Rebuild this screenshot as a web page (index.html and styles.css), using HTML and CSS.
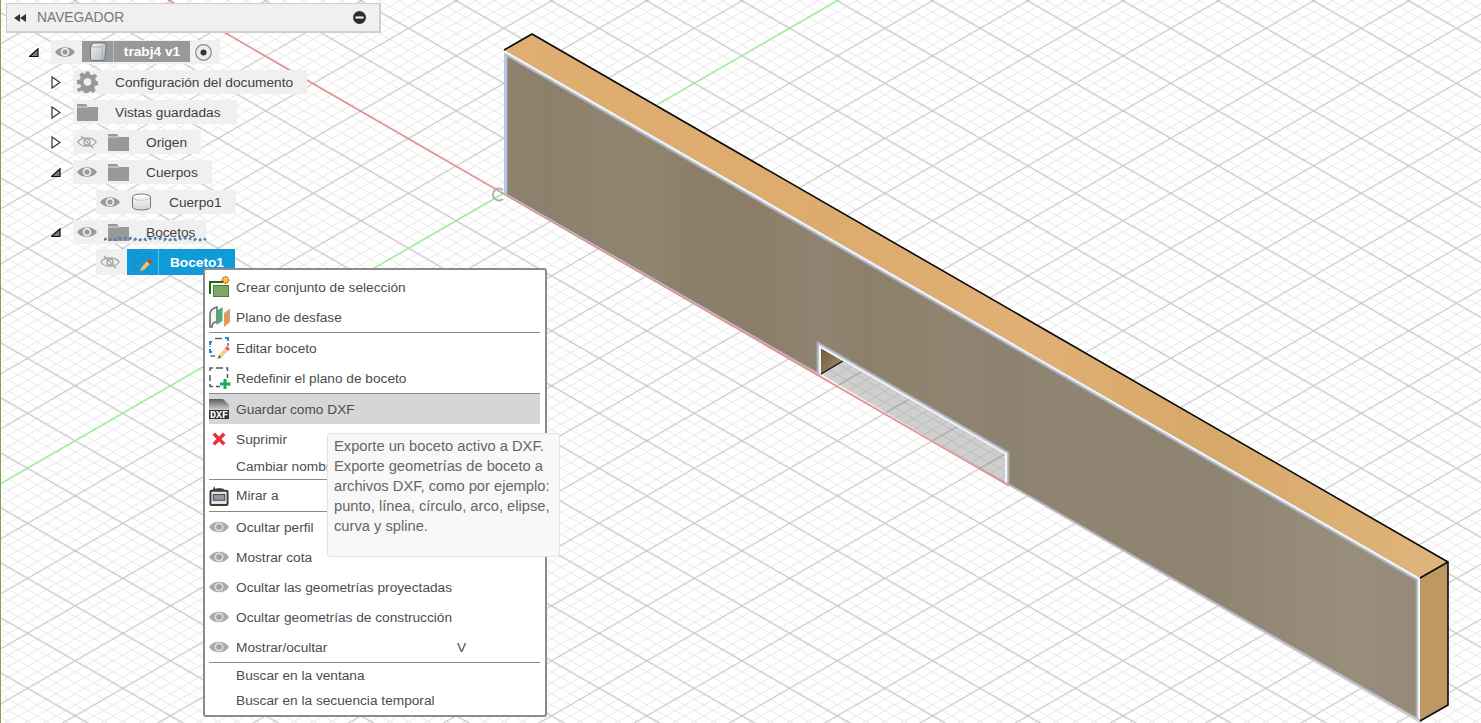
FILE: index.html
```html
<!DOCTYPE html>
<html lang="es">
<head>
<meta charset="utf-8">
<title>Navegador</title>
<link rel="stylesheet" href="styles.css">
</head>
<body>
<div class="viewport">

<svg class="canvas" width="1481" height="723" viewBox="0 0 1481 723">
  <defs>
    <pattern id="grid" width="100" height="100" patternUnits="userSpaceOnUse" patternTransform="matrix(.4763 .275 .4763 -.275 1161.17 28.3)">
      <g class="minor">
        <path d="M30 0V100M50 0V100M70 0V100M90 0V100M0 30H100M0 50H100M0 70H100M0 90H100"/>
      </g>
      <g class="major">
        <path d="M10 0V100M0 10H100"/>
      </g>
    </pattern>
    <linearGradient id="frontFill" gradientUnits="userSpaceOnUse" x1="504" y1="0" x2="1420" y2="0">
      <stop offset="0" stop-color="#8e8270"/>
      <stop offset=".05" stop-color="#8c806c"/>
      <stop offset=".1" stop-color="#8f836f"/>
      <stop offset=".16" stop-color="#91856f"/>
      <stop offset=".2" stop-color="#8c7f6a"/>
      <stop offset=".27" stop-color="#8b7d68"/>
      <stop offset=".34" stop-color="#8f8371"/>
      <stop offset=".4" stop-color="#8c806c"/>
      <stop offset=".47" stop-color="#8f8370"/>
      <stop offset=".55" stop-color="#8d8170"/>
      <stop offset=".62" stop-color="#908472"/>
      <stop offset=".7" stop-color="#8e8270"/>
      <stop offset=".78" stop-color="#8f8472"/>
      <stop offset=".86" stop-color="#958977"/>
      <stop offset=".93" stop-color="#998d7b"/>
      <stop offset="1" stop-color="#948978"/>
    </linearGradient>
    <linearGradient id="topFill" gradientUnits="userSpaceOnUse" x1="504" y1="0" x2="1448" y2="0">
      <stop offset="0" stop-color="#dfae70"/>
      <stop offset=".35" stop-color="#dcab6d"/>
      <stop offset=".55" stop-color="#e0b074"/>
      <stop offset=".75" stop-color="#d7a869"/>
      <stop offset="1" stop-color="#e0b57c"/>
    </linearGradient>
    <linearGradient id="holeFill" x1="0" y1="0" x2="1" y2="1">
      <stop offset="0" stop-color="#6f5a3c"/>
      <stop offset="1" stop-color="#a58f6a"/>
    </linearGradient>
    <clipPath id="frontClip">
      <path d="M504 50L1420 578V721L1005 483V454.500L821 348.300V376L504 194Z"/>
    </clipPath>
  </defs>

  <rect class="grid-fill" width="1481" height="723"/>
  <path class="axis-green" d="M0 484L840 -1"/>
  <path class="axis-red" d="M168 0L1009 486"/>
  <rect class="edge-green" width="1" height="723"/>

  <path class="hole-shade" d="M821 374L843 361L1005 454.500V483Z"/>
  <path fill="url(#holeFill)" d="M821 348.300L843 361L821 374Z"/>
  <path class="hole-line" d="M821 374L843 361"/>

  <path fill="url(#topFill)" d="M504 50L532 34L1448 562L1420 578Z"/>
  <path class="side-face" d="M1420 578L1448 562V705L1420 721Z"/>
  <path fill="url(#frontFill)" d="M504 50L1420 578V721L1005 483V454.500L821 348.300V376L504 194Z"/>

  <g clip-path="url(#frontClip)">
    <path class="outline-grey" d="M1420 721V578L504 50M821 376V348.300L1005 454.500V483"/>
    <path class="outline-blue" d="M504 194V50L1420 578V721M821 376V348.300L1005 454.500V483"/>
    <path class="outline-white" d="M1420 721V578L504 50M821 376V348.300L1005 454.500V483"/>
    <path class="outline-bottom" d="M504 194L821 376M1005 483L1420 721"/>
  </g>
  <path class="black-edge" d="M504 50L532 34L1448 562V705L1420 721M1420 578L1448 562"/>
  <path class="origin-arc" d="M503 190A6 6 0 1 0 503 199"/>
</svg>

<svg class="sprite" width="0" height="0">
  <defs>
    <linearGradient id="cubeFace" x1="0" y1="0" x2="1" y2="1">
      <stop offset="0" stop-color="#f4f6f8"/>
      <stop offset="1" stop-color="#aeb4ba"/>
    </linearGradient>
    <linearGradient id="cylBody" x1="0" y1="0" x2="0" y2="1">
      <stop offset="0" stop-color="#ffffff"/>
      <stop offset="1" stop-color="#d4d4d4"/>
    </linearGradient>
    <linearGradient id="docFill" x1="0" y1="0" x2="0" y2="1">
      <stop offset="0" stop-color="#5c5c5c"/>
      <stop offset=".55" stop-color="#cfcfcf"/>
    </linearGradient>
    <symbol id="i-eye" viewBox="0 0 20 14">
      <path class="f-grey" d="M0 7C4 .5 16 .5 20 7C16 13.500 4 13.500 0 7Z"/>
      <circle class="f-chip" cx="10" cy="7" r="4.300"/>
      <circle class="f-grey" cx="10" cy="7" r="2.600"/>
    </symbol>
    <symbol id="i-eye-off" viewBox="0 0 20 14">
      <path class="s-grey" d="M.8 7C4.500 1.500 15.500 1.500 19.200 7C15.500 12.500 4.500 12.500 .8 7Z"/>
      <circle class="s-grey" cx="10" cy="7" r="3"/>
      <path class="s-grey" d="M4 1L16 13"/>
    </symbol>
    <symbol id="i-folder" viewBox="0 0 21 17">
      <path class="f-grey" d="M0 0H9L11 3H21V17H0Z"/>
      <path class="s-chip" d="M0 3H11"/>
    </symbol>
    <symbol id="i-gear" viewBox="0 0 22 22">
      <path class="f-grey" fill-rule="evenodd" d="M9 0h4l.6 3 2.300 1 2.600-1.700 2.800 2.800L19 7.700l1 2.300 2 .5v3.800l-3 .5-1 2.300 1.700 2.600-2.800 2.800-2.600-1.700-2.300 1-.5 2h-4l-.5-3-2.300-1-2.600 1.700-2.800-2.800L4.500 16l-1-2.300-3.500-.7v-4l3-.6 1-2.300L2.300 3.600 5.100.8l2.600 1.700L9 2zM11 7a4 4 0 1 0 0 8 4 4 0 0 0 0-8z"/>
    </symbol>
    <symbol id="i-cube" viewBox="0 0 18 20">
      <path fill="url(#cubeFace)" stroke="#6f7478" d="M4 1H16Q17 1 17 2L16 17Q16 18.500 14 18.500H3Q1.500 18.500 1.500 17V5Z"/>
      <path class="s-thin-light" d="M2 5H13L16.500 1.500M13 5L13.500 18"/>
    </symbol>
    <symbol id="i-cyl" viewBox="0 0 20 18">
      <path fill="url(#cylBody)" stroke="#777" d="M1 4C1 0 19 0 19 4V14C19 18 1 18 1 14Z"/>
      <path fill="none" stroke="#c6c6c6" d="M1.500 5C4 8 16 8 18.500 5"/>
    </symbol>
    <symbol id="i-sketch" viewBox="0 0 20 20">
      <rect class="s-sketch" x="1.500" y="1.500" width="14" height="15" stroke-dasharray="3 1"/>
      <path class="s-sketch" d="M5 11A5 5 0 0 1 12 6"/>
      <path fill="#f2c05c" d="M8 16L14 9L17 12L11 18L7 19Z"/>
      <path fill="#e2342c" d="M14 9L16 7L19 10L17 12Z"/>
    </symbol>
    <symbol id="i-menu-set" viewBox="0 0 22 22">
      <path fill="none" stroke="#1c6a10" stroke-width="2" d="M1 18V6H14"/>
      <rect x="4.500" y="9.500" width="15" height="11" fill="#7fa866" stroke="#4d7a3a"/>
      <path fill="none" stroke="#e0401c" stroke-width="1.500" d="M16.500 0V8M12.500 4H20.500M13.800 1.300L19.200 6.700M19.200 1.300L13.800 6.700"/>
      <circle cx="16.500" cy="4" r="2.400" fill="#f8d030"/>
    </symbol>
    <symbol id="i-menu-plane" viewBox="0 0 22 22">
      <path fill="#f1f1f1" stroke="#666" stroke-width="1.500" d="M1 21V8Q1 3 8 1V16Q3 16 3 21Z"/>
      <path fill="#4fab70" d="M7.500 19V5L13.500 1V15Z"/>
      <path fill="#df9a66" d="M15 21V7L21 2.500V16Z"/>
    </symbol>
    <symbol id="i-menu-edit" viewBox="0 0 22 22">
      <path fill="none" stroke="#1e88d8" stroke-width="2" d="M1 8V5H3M1 12V15H3M16 1H19V4"/>
      <path fill="none" stroke="#666" stroke-width="1.500" d="M6 1.500H13M1 10V9M1.500 19H6M19 6V9"/>
      <path fill="#f4cf8a" d="M10 18L16 11L19 14L13 20L9.500 21Z"/>
      <path fill="#e85a50" d="M16 11L18 9L21 12L19 14Z"/>
      <path fill="#666" d="M10 18L12.500 20.500L8.500 22Z"/>
    </symbol>
    <symbol id="i-menu-plane2" viewBox="0 0 22 22">
      <path fill="none" stroke="#555" stroke-width="1.500" d="M1 4V1H4M7 1H14M17 1H18.500V4M1 8V14M1 17V19.500H4M18.500 7V11M7 19.500H11"/>
      <path fill="none" stroke="#1fa855" stroke-width="3" d="M16 12V22M11 17H21.500"/>
    </symbol>
    <symbol id="i-menu-dxf" viewBox="0 0 20 20">
      <path fill="url(#docFill)" d="M0 0H14L20 6V20H0Z"/>
      <rect y="11" width="20" height="9" fill="#333"/>
      <text class="dxf-text" x="10" y="19">DXF</text>
    </symbol>
    <symbol id="i-menu-x" viewBox="0 0 16 16">
      <path fill="none" stroke="#e8323c" stroke-width="4" d="M2 2L14 14M14 2L2 14"/>
    </symbol>
    <symbol id="i-menu-look" viewBox="0 0 20 21">
      <path fill="#444" d="M3 5L5 0L6 3L10 2L15 3V5Z"/>
      <rect x="1" y="5" width="18" height="15" rx="1" fill="#e4e4e4" stroke="#3a3a3a" stroke-width="2"/>
      <rect x="4" y="9" width="12" height="6" fill="#8f9aa6" stroke="#444"/>
    </symbol>
    <symbol id="i-menu-eye" viewBox="0 0 20 14">
      <path fill="#a9a9a9" d="M0 7C4 0 16 0 20 7C16 14 4 14 0 7Z"/>
      <circle cx="10" cy="7" r="4.500" fill="#dcdcdc"/>
      <circle cx="10" cy="7" r="2.800" fill="#a0a0a0"/>
    </symbol>
  </defs>
</svg>

<aside class="browser">
  <header class="browser-head">
    <svg class="rewind" width="12" height="8" viewBox="0 0 12 8"><path d="M6 0V8L0 4ZM12 0V8L6 4Z"/></svg>
    <span class="browser-title">NAVEGADOR</span>
    <svg class="collapse" width="13" height="13" viewBox="0 0 13 13"><circle cx="6.500" cy="6.500" r="6.500"/><rect class="collapse-bar" x="2.500" y="5.500" width="8" height="2"/></svg>
  </header>

  <div class="tree">
    <div class="row d0">
      <span class="twist"><svg width="10" height="9" viewBox="0 0 10 9"><path class="tri-open" d="M.5 8.500L9 .8V8.500Z"/></svg></span>
      <div class="chip chip-root">
        <svg class="ic-eye"><use href="#i-eye"/></svg>
        <div class="seg seg-grey">
          <span class="seg-icon"><svg width="18" height="20"><use href="#i-cube"/></svg></span>
          <span class="seg-label">trabj4 v1</span>
        </div>
        <svg class="radio" width="17" height="17" viewBox="0 0 17 17"><circle cx="8.500" cy="8.500" r="7.800" class="radio-ring"/><circle cx="8.500" cy="8.500" r="3" class="radio-dot"/></svg>
      </div>
    </div>

    <div class="row d1">
      <span class="twist"><svg width="10" height="13" viewBox="0 0 10 13"><path class="tri-closed" d="M1 1L9 6.500L1 12Z"/></svg></span>
      <div class="chip">
        <svg class="ic-main ic-gear"><use href="#i-gear"/></svg>
        <span class="label">Configuración del documento</span>
      </div>
    </div>

    <div class="row d1">
      <span class="twist"><svg width="10" height="13" viewBox="0 0 10 13"><path class="tri-closed" d="M1 1L9 6.500L1 12Z"/></svg></span>
      <div class="chip chip-vistas">
        <svg class="ic-main"><use href="#i-folder"/></svg>
        <span class="label">Vistas guardadas</span>
      </div>
    </div>

    <div class="row d1">
      <span class="twist"><svg width="10" height="13" viewBox="0 0 10 13"><path class="tri-closed" d="M1 1L9 6.500L1 12Z"/></svg></span>
      <div class="chip">
        <svg class="ic-eye"><use href="#i-eye-off"/></svg>
        <svg class="ic-main ic-after-eye"><use href="#i-folder"/></svg>
        <span class="label">Origen</span>
      </div>
    </div>

    <div class="row d1">
      <span class="twist"><svg width="10" height="9" viewBox="0 0 10 9"><path class="tri-open" d="M.5 8.500L9 .8V8.500Z"/></svg></span>
      <div class="chip">
        <svg class="ic-eye"><use href="#i-eye"/></svg>
        <svg class="ic-main ic-after-eye"><use href="#i-folder"/></svg>
        <span class="label">Cuerpos</span>
      </div>
    </div>

    <div class="row d2">
      <span class="twist"></span>
      <div class="chip">
        <svg class="ic-eye"><use href="#i-eye"/></svg>
        <svg class="ic-main ic-after-eye ic-cyl"><use href="#i-cyl"/></svg>
        <span class="label">Cuerpo1</span>
      </div>
    </div>

    <div class="row d1">
      <span class="twist"><svg width="10" height="9" viewBox="0 0 10 9"><path class="tri-open" d="M.5 8.500L9 .8V8.500Z"/></svg></span>
      <div class="chip chip-bocetos">
        <svg class="ic-eye"><use href="#i-eye"/></svg>
        <svg class="ic-main ic-after-eye"><use href="#i-folder"/></svg>
        <span class="label">Bocetos</span>
        <svg class="squiggle" width="103" height="6" viewBox="0 0 103 6"><path d="M0 4L3 2L6 4L9 2L12 4L15 2L18 4L21 2L24 4L27 2L30 4L33 2L36 4L39 2L42 4L45 2L48 4L51 2L54 4L57 2L60 4L63 2L66 4L69 2L72 4L75 2L78 4L81 2L84 4L87 2L90 4L93 2L96 4L99 2L102 4"/></svg>
      </div>
    </div>

    <div class="row d2">
      <span class="twist"></span>
      <div class="chip chip-active">
        <svg class="ic-eye"><use href="#i-eye-off"/></svg>
        <div class="seg seg-blue">
          <span class="seg-icon"><svg width="20" height="20"><use href="#i-sketch"/></svg></span>
          <span class="seg-label">Boceto1</span>
        </div>
      </div>
    </div>
  </div>
</aside>

<nav class="menu">
  <div class="mi"><svg class="mi-ic mi-ic-22"><use href="#i-menu-set"/></svg><span>Crear conjunto de selección</span></div>
  <div class="mi"><svg class="mi-ic mi-ic-22"><use href="#i-menu-plane"/></svg><span>Plano de desfase</span></div>
  <hr class="sep">
  <div class="mi"><svg class="mi-ic mi-ic-22"><use href="#i-menu-edit"/></svg><span>Editar boceto</span></div>
  <div class="mi"><svg class="mi-ic mi-ic-22"><use href="#i-menu-plane2"/></svg><span>Redefinir el plano de boceto</span></div>
  <hr class="sep">
  <div class="mi mi-hover"><svg class="mi-ic mi-ic-20"><use href="#i-menu-dxf"/></svg><span>Guardar como DXF</span></div>
  <div class="mi"><svg class="mi-ic mi-ic-x"><use href="#i-menu-x"/></svg><span>Suprimir</span></div>
  <div class="mi mi-short"><span class="mi-noicon">Cambiar nombre</span></div>
  <hr class="sep">
  <div class="mi mi-tall"><svg class="mi-ic mi-ic-20"><use href="#i-menu-look"/></svg><span>Mirar a</span></div>
  <hr class="sep">
  <div class="mi"><svg class="mi-ic mi-ic-eye"><use href="#i-menu-eye"/></svg><span>Ocultar perfil</span></div>
  <div class="mi"><svg class="mi-ic mi-ic-eye"><use href="#i-menu-eye"/></svg><span>Mostrar cota</span></div>
  <div class="mi"><svg class="mi-ic mi-ic-eye"><use href="#i-menu-eye"/></svg><span>Ocultar las geometrías proyectadas</span></div>
  <div class="mi"><svg class="mi-ic mi-ic-eye"><use href="#i-menu-eye"/></svg><span>Ocultar geometrías de construcción</span></div>
  <div class="mi"><svg class="mi-ic mi-ic-eye"><use href="#i-menu-eye"/></svg><span class="mi-keyed">Mostrar/ocultar</span><span>V</span></div>
  <hr class="sep">
  <div class="mi mi-short"><span class="mi-noicon">Buscar en la ventana</span></div>
  <div class="mi mi-short"><span class="mi-noicon">Buscar en la secuencia temporal</span></div>
</nav>

<div class="tooltip">Exporte un boceto activo a DXF.<br>Exporte geometrías de boceto a<br>archivos DXF, como por ejemplo:<br>punto, línea, círculo, arco, elipse,<br>curva y spline.</div>

</div>
</body>
</html>
```

FILE: styles.css
```css
* { box-sizing: border-box; }

html, body {
  margin: 0;
  padding: 0;
  width: 1481px;
  height: 723px;
  overflow: hidden;
  background: #fff;
  font-family: "Liberation Sans", Arial, sans-serif;
  font-size: 13.7px;
  color: #444;
}

.viewport {
  position: relative;
  width: 1481px;
  height: 723px;
  overflow: hidden;
}

/* 3D canvas */
.canvas { position: absolute; left: 0; top: 0; display: block; }
.sprite { position: absolute; }
.grid-fill { fill: url(#grid); }
.minor path { fill: none; stroke: #e9e9e9; stroke-width: 2.1; }
.major path { fill: none; stroke: #c6c6c6; stroke-width: 2.4; }
.axis-green { fill: none; stroke: #93f58c; stroke-width: 1.2; }
.axis-red { fill: none; stroke: #f87c7c; stroke-width: 1.2; }
.edge-green { fill: #7da652; }
.hole-shade { fill: rgba(0, 0, 0, .19); }
.hole-line { fill: none; stroke: #111; stroke-width: 1.4; }
.side-face { fill: #bd9863; }
.black-edge { fill: none; stroke: #0a0a0a; stroke-width: 1.6; stroke-linejoin: round; }
.outline-grey { fill: none; stroke: #a9a69c; stroke-width: 9; }
.outline-blue { fill: none; stroke: #b7c6e4; stroke-width: 6.5; }
.outline-white { fill: none; stroke: #f8f6f1; stroke-width: 3.8; }
.outline-bottom { fill: none; stroke: #bdbacb; stroke-width: 3; }
.origin-arc { fill: none; stroke: #b0b0b0; stroke-width: 2; }

/* Browser panel */
.browser {
  position: absolute;
  left: 0;
  top: 0;
  width: 381px;
}
.browser-head {
  display: flex;
  align-items: center;
  height: 30px;
  margin: 3px 0 0 6px;
  padding: 0 13px 0 7px;
  background: #f0f0f0;
  border: 2px solid #cfcfcf;
  border-width: 1px 2px 2px 1px;
}
.rewind { fill: #333; flex: none; }
.browser-title { margin-left: 11px; flex: 1; font-size: 13.8px; color: #777; }
.collapse { fill: #2e2e2e; flex: none; }
.collapse-bar { fill: #fff; }

.tree { margin-top: 4px; }
.row { display: flex; align-items: center; height: 30px; }
.d0 { padding-left: 29px; }
.d1 { padding-left: 51px; }
.d2 { padding-left: 74px; }
.twist { flex: 0 0 22px; display: flex; align-items: center; }
.tri-open { fill: #7c7c7c; stroke: #111; stroke-width: 1.2; }
.tri-closed { fill: #fff; stroke: #333; stroke-width: 1.2; }

.chip {
  position: relative;
  display: flex;
  align-items: center;
  height: 24px;
  padding: 0 14px 0 4px;
  background: #f0f0f0;
  white-space: nowrap;
}
.chip-root { padding-right: 8px; }
.chip-vistas { padding-right: 16px; }
.chip-bocetos { padding-right: 11px; }
.chip-active { padding-right: 0; height: 26px; }
.ic-eye { flex: none; width: 20px; height: 14px; }
.ic-main { flex: none; width: 21px; height: 17px; }
.ic-gear { height: 22px; }
.ic-after-eye { margin-left: 11px; }
.ic-cyl { height: 18px; }
.label { margin-left: 17px; color: #3f3f3f; }

.f-grey { fill: #999; }
.f-chip { fill: #f0f0f0; }
.s-grey { fill: none; stroke: #a4a4a4; stroke-width: 1.3; }
.s-chip { fill: none; stroke: #f0f0f0; stroke-width: .8; }
.s-thin-light { fill: none; stroke: #8d9296; stroke-width: .6; }
.s-sketch { fill: none; stroke: #2b7fae; stroke-width: 1; }

.seg {
  display: flex;
  align-self: stretch;
  width: 108px;
  margin-left: 7px;
  color: #fff;
  font-weight: 700;
}
.seg-grey { background: #999; margin-top: 1px; margin-bottom: 2px; }
.seg-blue { background: #0f9bd9; }
.seg-icon {
  flex: 0 0 32px;
  display: flex;
  align-items: center;
  justify-content: center;
  border-right: 1px solid rgba(255, 255, 255, .35);
}
.seg-label { flex: 1; display: flex; align-items: center; justify-content: center; }
.radio { margin-left: 5px; flex: none; }
.radio-ring { fill: #ececec; stroke: #8e8e8e; stroke-width: 1.3; }
.radio-dot { fill: #333; }
.squiggle {
  position: absolute;
  left: 31px;
  bottom: 2px;
  fill: none;
  stroke: #5f7ea6;
  stroke-width: 2.5;
  stroke-dasharray: 3 3;
}

/* Context menu */
.menu {
  position: absolute;
  left: 203px;
  top: 268px;
  width: 344px;
  padding: 2px 5px 2px 4px;
  background: #fff;
  border: 2px solid #8b8b8b;
  border-radius: 3px;
  color: #4d4d4d;
}
.mi {
  display: flex;
  align-items: center;
  height: 30px;
  white-space: nowrap;
}
.mi-short { height: 25px; }
.mi-tall { height: 31px; }
.mi-hover { background: #d6d6d6; }
.mi-noicon { margin-left: 27px; }
.mi-ic { flex: none; }
.mi-ic-22 { width: 22px; height: 22px; margin-right: 5px; }
.mi-ic-20 { width: 20px; height: 20px; margin-right: 7px; }
.mi-ic-x { width: 14px; height: 14px; margin: 0 10px 0 3px; }
.mi-ic-eye { width: 20px; height: 14px; margin-right: 7px; }
.mi-keyed { flex: 0 0 221px; }
.sep { height: 1px; margin: 0; border: 0; background: #8a8a8a; }
.dxf-text {
  font-family: "Liberation Mono", monospace;
  font-size: 10px;
  font-weight: 700;
  fill: #fff;
  text-anchor: middle;
}

/* Tooltip */
.tooltip {
  position: absolute;
  left: 327px;
  top: 433px;
  width: 233px;
  height: 124px;
  padding: 2px 6px;
  background: #f8f8f8;
  border: 1px solid #e4e4e4;
  border-radius: 3px;
  font-size: 14.7px;
  color: #666;
  line-height: 20px;
  white-space: nowrap;
}
```
